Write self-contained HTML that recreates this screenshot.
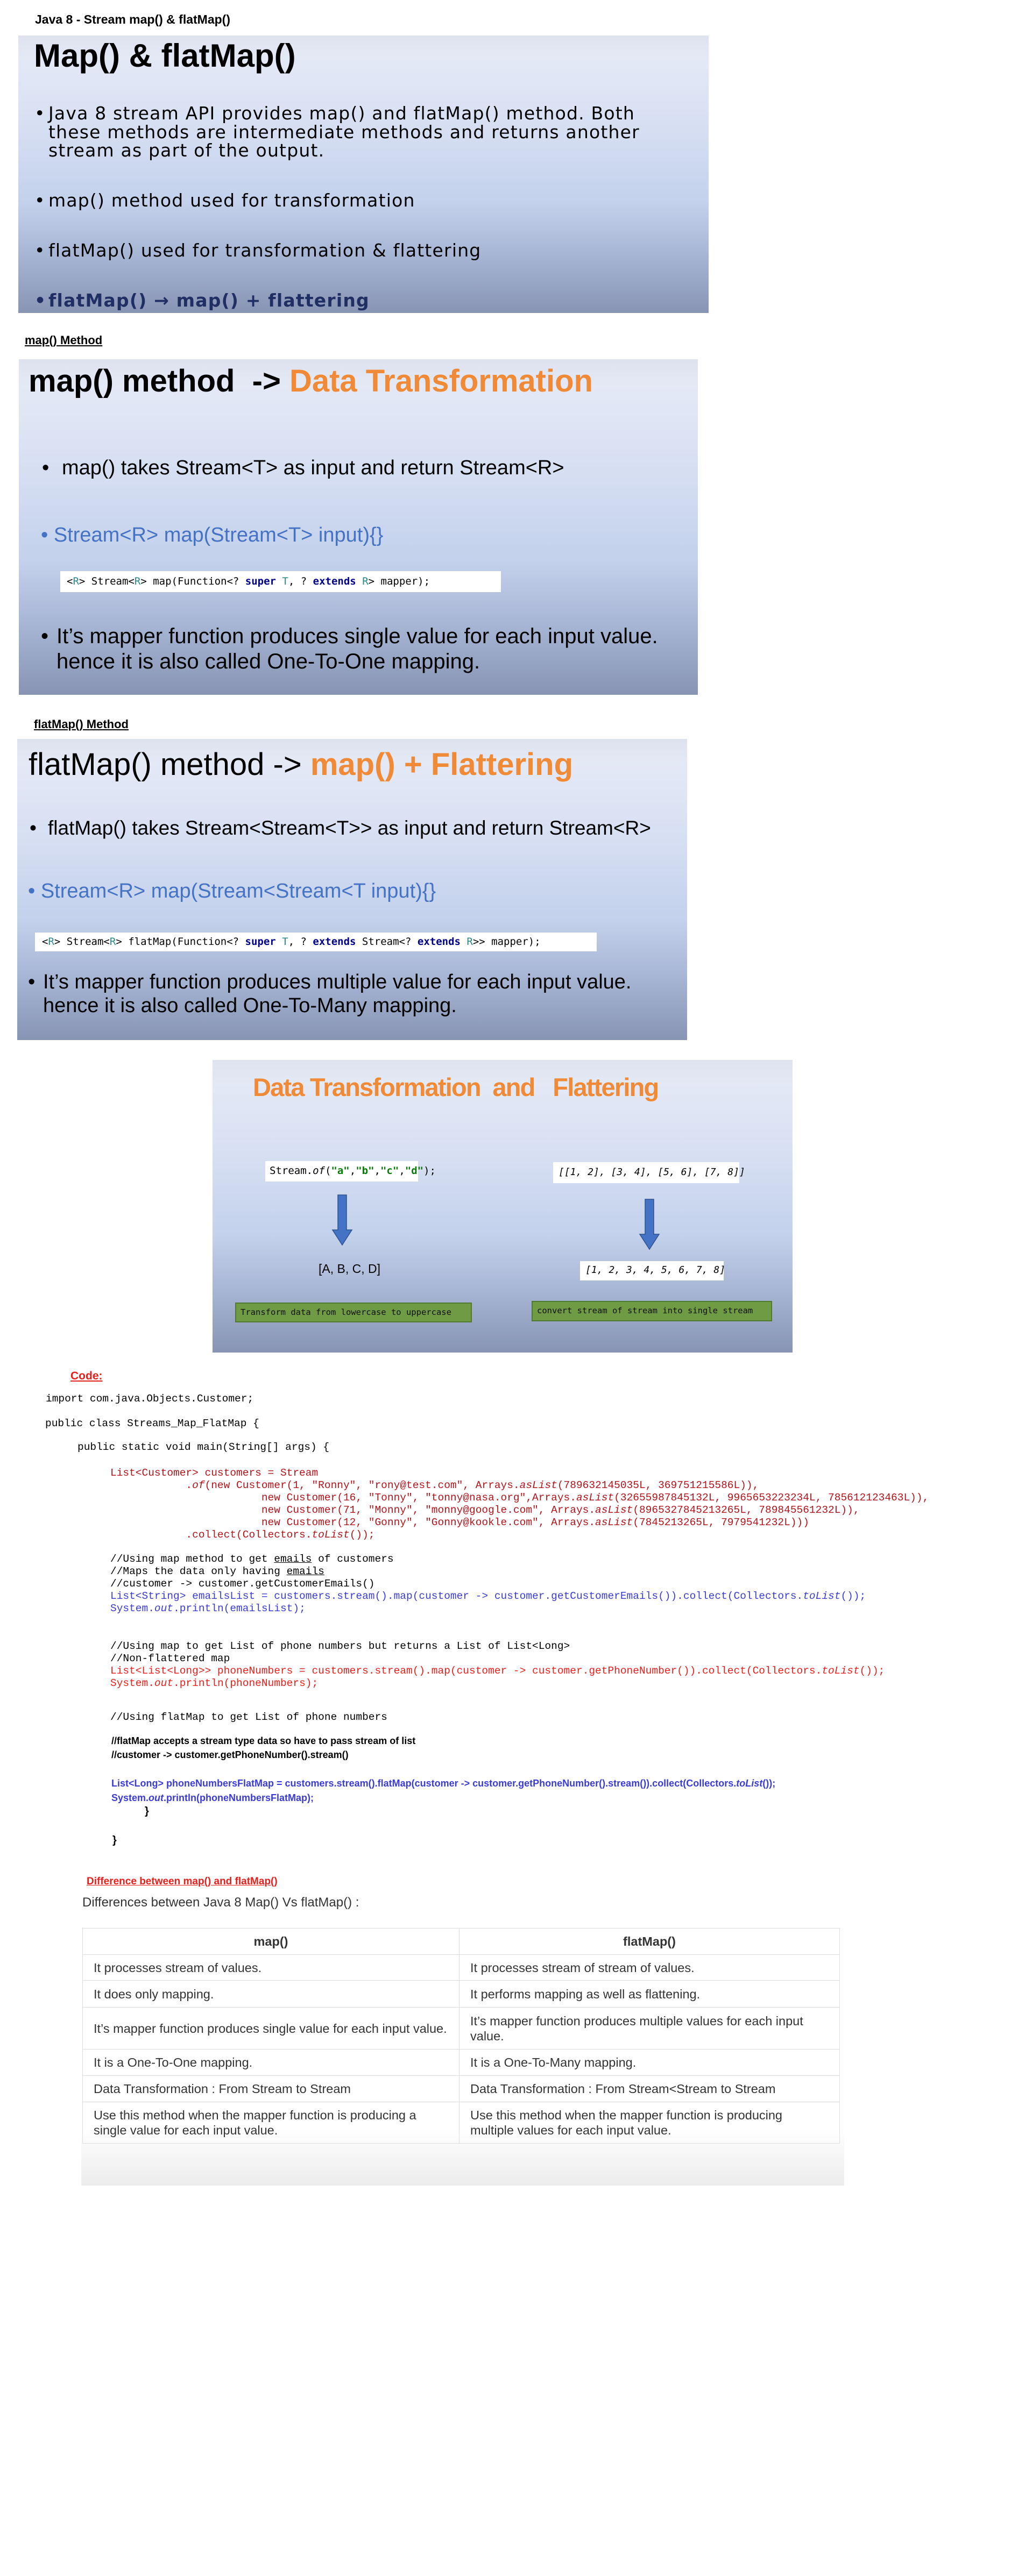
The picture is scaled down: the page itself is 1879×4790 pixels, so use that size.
<!DOCTYPE html>
<html><head><meta charset="utf-8">
<style>
*{margin:0;padding:0;box-sizing:border-box}
body{width:1879px;height:4790px;background:#fff;position:relative;overflow:hidden;font-family:"Liberation Sans",sans-serif;color:#000}
.a{position:absolute;white-space:pre;line-height:1}
.slide{position:absolute;background:linear-gradient(#dde2ee 0%,#e4e9f6 8%,#d5def2 35%,#c3d1ec 60%,#a9b7d6 78%,#8794b3 100%)}
.dv{font-family:"DejaVu Sans",sans-serif;letter-spacing:1.2px}
.mono{font-family:"DejaVu Sans Mono","Liberation Mono",monospace}
.cr{font-family:"Liberation Mono",monospace;font-size:19.5px}
.or{color:#f08a36}
.bl{color:#4472c4}
.lbl{font-weight:bold;font-size:22px;text-decoration:underline}
.cbox{position:absolute;background:#fff}
.kw{color:#00008b;font-weight:bold}
.tp{color:#2a8a8a}
.red{color:#b3141b}
.rr{color:#e8201c}
.cb{color:#3b3bd6}
.gr{position:absolute;background:#6e9b44;border:2px solid #4f7a30;font-family:"DejaVu Sans Mono",monospace;font-size:15.5px;color:#111;line-height:33px;padding-left:8px;white-space:pre}
table{position:absolute;left:153px;top:3585px;width:1408px;border-collapse:collapse;font-family:"Liberation Sans",sans-serif;font-size:23.5px;color:#333}
td,th{border:1px solid #ddd;padding:0 20px;vertical-align:middle;text-align:left;line-height:28px}
th{text-align:center;font-weight:bold;height:49px}
</style></head><body>

<div class="a" style="left:65px;top:25px;font-size:23px;font-weight:bold">Java 8 - Stream map() &amp; flatMap()</div>

<!-- Slide 1 -->
<div class="slide" style="left:34px;top:66px;width:1283px;height:516px"></div>
<div class="a" style="left:63px;top:74px;font-size:60px;font-weight:bold">Map() &amp; flatMap()</div>
<div class="a dv" style="left:64px;top:194px;font-size:33px;line-height:34.5px">•</div>
<div class="a dv" style="left:90px;top:194px;font-size:33px;line-height:34.5px">Java 8 stream API provides map() and flatMap() method. Both
these methods are intermediate methods and returns another
stream as part of the output.</div>
<div class="a dv" style="left:64px;top:356px;font-size:33px">•</div>
<div class="a dv" style="left:90px;top:356px;font-size:33px">map() method used for transformation</div>
<div class="a dv" style="left:64px;top:449px;font-size:33px">•</div>
<div class="a dv" style="left:90px;top:449px;font-size:33px">flatMap() used for transformation &amp; flattering</div>
<div class="a dv" style="left:64px;top:542px;font-size:33px;color:#1f2f63;font-weight:bold">• </div>
<div class="a dv" style="left:90px;top:542px;font-size:33px;color:#1f2f63;font-weight:bold">flatMap() → map() + flattering</div>

<!-- Slide 2 -->
<div class="a lbl" style="left:46px;top:622px">map() Method</div>
<div class="slide" style="left:35px;top:668px;width:1262px;height:624px"></div>
<div class="a" style="left:53px;top:680px;font-size:58px;font-weight:bold">map() method  -&gt; <span class="or">Data Transformation</span></div>
<div class="a" style="left:78px;top:851px;font-size:38px">•</div>
<div class="a" style="left:115px;top:851px;font-size:38px">map() takes Stream&lt;T&gt; as input and return Stream&lt;R&gt;</div>
<div class="a bl" style="left:76px;top:976px;font-size:38px">• Stream&lt;R&gt; map(Stream&lt;T&gt; input){}</div>
<div class="cbox" style="left:112px;top:1062px;width:819px;height:39px"></div>
<div class="a mono" style="left:124px;top:1072px;font-size:19px">&lt;<span class="tp">R</span>&gt; Stream&lt;<span class="tp">R</span>&gt; map(Function&lt;? <span class="kw">super</span> <span class="tp">T</span>, ? <span class="kw">extends</span> <span class="tp">R</span>&gt; mapper);</div>
<div class="a" style="left:76px;top:1160px;font-size:40px;line-height:47px">•</div>
<div class="a" style="left:105px;top:1160px;font-size:40px;line-height:47px">It’s mapper function produces single value for each input value.
hence it is also called One-To-One mapping.</div>

<!-- Slide 3 -->
<div class="a lbl" style="left:63px;top:1336px">flatMap() Method</div>
<div class="slide" style="left:32px;top:1374px;width:1245px;height:560px"></div>
<div class="a" style="left:53px;top:1393px;font-size:58px">flatMap() method -&gt; <span class="or" style="font-weight:bold">map() + Flattering</span></div>
<div class="a" style="left:55px;top:1521px;font-size:37px">•</div>
<div class="a" style="left:89px;top:1521px;font-size:37px">flatMap() takes Stream&lt;Stream&lt;T&gt;&gt; as input and return Stream&lt;R&gt;</div>
<div class="a bl" style="left:52px;top:1638px;font-size:38px">• Stream&lt;R&gt; map(Stream&lt;Stream&lt;T input){}</div>
<div class="cbox" style="left:65px;top:1734px;width:1044px;height:35px"></div>
<div class="a mono" style="left:78px;top:1742px;font-size:19px">&lt;<span class="tp">R</span>&gt; Stream&lt;<span class="tp">R</span>&gt; flatMap(Function&lt;? <span class="kw">super</span> <span class="tp">T</span>, ? <span class="kw">extends</span> Stream&lt;? <span class="kw">extends</span> <span class="tp">R</span>&gt;&gt; mapper);</div>
<div class="a" style="left:52px;top:1804px;font-size:38px;line-height:44px">•</div>
<div class="a" style="left:80px;top:1804px;font-size:38px;line-height:44px">It’s mapper function produces multiple value for each input value.
hence it is also called One-To-Many mapping.</div>

<!-- Slide 4 -->
<div class="slide" style="left:395px;top:1971px;width:1078px;height:544px"></div>
<div class="a or" style="left:470px;top:1998px;font-size:47px;font-weight:bold;letter-spacing:-1.8px">Data Transformation  and   Flattering</div>
<div class="cbox" style="left:493px;top:2159px;width:284px;height:38px"></div>
<div class="a mono" style="left:501px;top:2168px;font-size:19px">Stream.<i>of</i>(<b style="color:#0a7a0a">"a"</b>,<b style="color:#0a7a0a">"b"</b>,<b style="color:#0a7a0a">"c"</b>,<b style="color:#0a7a0a">"d"</b>);</div>
<div class="cbox" style="left:1028px;top:2161px;width:346px;height:39px"></div>
<div class="a mono" style="left:1038px;top:2171px;font-size:18px;font-style:italic">[[1, 2], [3, 4], [5, 6], [7, 8]]</div>
<svg class="a" style="left:616px;top:2221px" width="40" height="96"><polygon points="12,1 28,1 28,66 38,66 20,94 2,66 12,66" fill="#4472c4" stroke="#2f528f" stroke-width="1.5"/></svg>
<svg class="a" style="left:1187px;top:2229px" width="40" height="96"><polygon points="12,1 28,1 28,66 38,66 20,94 2,66 12,66" fill="#4472c4" stroke="#2f528f" stroke-width="1.5"/></svg>
<div class="a" style="left:592px;top:2348px;font-size:23px">[A, B, C, D]</div>
<div class="cbox" style="left:1078px;top:2345px;width:267px;height:36px"></div>
<div class="a mono" style="left:1088px;top:2353px;font-size:18px;font-style:italic">[1, 2, 3, 4, 5, 6, 7, 8]</div>
<div class="gr" style="left:437px;top:2422px;width:440px;height:37px">Transform data from lowercase to uppercase</div>
<div class="gr" style="left:988px;top:2419px;width:447px;height:38px">convert stream of stream into single stream</div>

<!-- Code -->
<div class="a" style="left:131px;top:2548px;font-size:21px;font-weight:bold;color:#e8201c;text-decoration:underline">Code:</div>
<div class="a cr" style="left:85px;top:2592px">import com.java.Objects.Customer;</div>
<div class="a cr" style="left:84px;top:2638px">public class Streams_Map_FlatMap {</div>
<div class="a cr" style="left:144px;top:2682px">public static void main(String[] args) {</div>
<div class="a cr red" style="left:205px;top:2728px;line-height:23px">List&lt;Customer&gt; customers = Stream
            .<i>of</i>(new Customer(1, "Ronny", "rony@test.com", Arrays.<i>asList</i>(789632145035L, 369751215586L)),
                        new Customer(16, "Tonny", "tonny@nasa.org",Arrays.<i>asList</i>(32655987845132L, 9965653223234L, 785612123463L)),
                        new Customer(71, "Monny", "monny@google.com", Arrays.<i>asList</i>(8965327845213265L, 789845561232L)),
                        new Customer(12, "Gonny", "Gonny@kookle.com", Arrays.<i>asList</i>(7845213265L, 7979541232L)))
            .collect(Collectors.<i>toList</i>());</div>
<div class="a cr" style="left:205px;top:2888px;line-height:23px">//Using map method to get <u>emails</u> of customers
//Maps the data only having <u>emails</u>
//customer -&gt; customer.getCustomerEmails()</div>
<div class="a cr cb" style="left:205px;top:2957px;line-height:23px">List&lt;String&gt; emailsList = customers.stream().map(customer -&gt; customer.getCustomerEmails()).collect(Collectors.<i>toList</i>());
System.<i>out</i>.println(emailsList);</div>
<div class="a cr" style="left:205px;top:3050px;line-height:23px">//Using map to get List of phone numbers but returns a List of List&lt;Long&gt;
//Non-flattered map</div>
<div class="a cr rr" style="left:205px;top:3096px;line-height:23px">List&lt;List&lt;Long&gt;&gt; phoneNumbers = customers.stream().map(customer -&gt; customer.getPhoneNumber()).collect(Collectors.<i>toList</i>());
System.<i>out</i>.println(phoneNumbers);</div>
<div class="a cr" style="left:205px;top:3184px">//Using flatMap to get List of phone numbers</div>
<div class="a" style="left:207px;top:3224px;font-size:18px;font-weight:bold;line-height:26px">//flatMap accepts a stream type data so have to pass stream of list
//customer -&gt; customer.getPhoneNumber().stream()</div>
<div class="a cb" style="left:207px;top:3303px;font-size:18px;font-weight:bold;line-height:27px">List&lt;Long&gt; phoneNumbersFlatMap = customers.stream().flatMap(customer -&gt; customer.getPhoneNumber().stream()).collect(Collectors.<i>toList</i>());
System.<i>out</i>.println(phoneNumbersFlatMap);</div>
<div class="a" style="left:269px;top:3358px;font-size:20px;font-weight:bold">}</div>
<div class="a" style="left:209px;top:3412px;font-size:20px;font-weight:bold">}</div>

<!-- Difference -->
<div class="a" style="left:161px;top:3489px;font-size:19px;font-weight:bold;color:#e8201c;text-decoration:underline">Difference between map() and flatMap()</div>
<div class="a" style="left:153px;top:3526px;font-size:24px;color:#333">Differences between Java 8 Map() Vs flatMap() :</div>
<div style="position:absolute;left:151px;top:3585px;width:1418px;height:479px;background:linear-gradient(#fff 0%,#fff 78%,#ececec 100%)"></div>
<table>
<tr><th>map()</th><th>flatMap()</th></tr>
<tr style="height:48px"><td style="width:700px">It processes stream of values.</td><td>It processes stream of stream of values.</td></tr>
<tr style="height:50px"><td>It does only mapping.</td><td>It performs mapping as well as flattening.</td></tr>
<tr style="height:78px"><td>It’s mapper function produces single value for each input value.</td><td>It’s mapper function produces multiple values for each input value.</td></tr>
<tr style="height:49px"><td>It is a One-To-One mapping.</td><td>It is a One-To-Many mapping.</td></tr>
<tr style="height:49px"><td>Data Transformation : From Stream to Stream</td><td>Data Transformation : From Stream&lt;Stream to Stream</td></tr>
<tr style="height:77px"><td>Use this method when the mapper function is producing a single value for each input value.</td><td>Use this method when the mapper function is producing multiple values for each input value.</td></tr>
</table>
</body></html>
